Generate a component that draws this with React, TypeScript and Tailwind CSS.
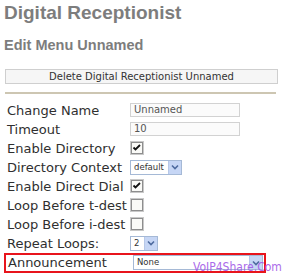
import React from "react";

const labelCls =
  "w-[126px] shrink-0 pl-[3px] text-[13px] leading-none text-[#2f2f2f] [font-family:'DejaVu_Sans',Verdana,sans-serif]";

function Check({ checked }: { checked: boolean }) {
  return (
    <svg width="14" height="14" viewBox="0 0 14 14">
      <rect x="0.5" y="0.5" width="13" height="13" fill="#f0f0ec" stroke="#c9c9c9" />
      <rect x="1.5" y="1.5" width="11" height="11" fill="#fafaf7" stroke="#8e8e8e" />
      {checked && (
        <path d="M3.5 6.5 L5.5 8.5 L10 4" fill="none" stroke="#111" strokeWidth="1.8" />
      )}
    </svg>
  );
}

function Select({ value, w }: { value: string; w: string }) {
  return (
    <div
      className={`${w} h-[15px] flex items-stretch border border-[#a5b9d6] bg-white [font-family:'DejaVu_Sans',Verdana,sans-serif]`}
    >
      <div className="flex-1 pl-[3px] text-[8.5px] leading-[13px] text-[#333]">{value}</div>
      <div className="w-[13px] flex items-center justify-center bg-[#c6d6f5] border-l border-[#b7c8e8]">
        <svg width="8" height="6" viewBox="0 0 8 6">
          <path d="M1 1.5 L4 4.5 L7 1.5" fill="none" stroke="#4d6a9e" strokeWidth="1.6" />
        </svg>
      </div>
    </div>
  );
}

function TextIn({ value }: { value: string }) {
  return (
    <div className="w-[110px] h-[14px] border border-[#d2d2d2] bg-[#fbfbfb] pl-[3px] text-[10px] leading-[12px] text-[#555] [font-family:'DejaVu_Sans',Verdana,sans-serif]">
      {value}
    </div>
  );
}

function Row({ label, children }: { label: string; children: React.ReactNode }) {
  return (
    <div className="flex h-[19px] items-center">
      <div className={labelCls}>{label}</div>
      <div className="flex items-center">{children}</div>
    </div>
  );
}

export default function App() {
  return (
    <div className="relative w-[285px] h-[274px] overflow-hidden bg-white pl-[4px]">
      <div className="h-[23px] pt-[3px] text-[19px] leading-none font-bold text-[#7d7d7d] [font-family:'Liberation_Sans',Arial,sans-serif]">
        Digital Receptionist
      </div>
      <div className="mt-[15px] text-[14.5px] leading-none font-bold text-[#7d7d7d] [font-family:'Liberation_Sans',Arial,sans-serif]">
        Edit Menu Unnamed
      </div>
      <div className="mt-[16px] ml-[1px] w-[273px] h-[15px] border border-[#cfcfcf] bg-[#f6f6f6] text-center text-[10px] leading-[13px] text-[#333] [font-family:'DejaVu_Sans',Verdana,sans-serif]">
        Delete Digital Receptionist Unnamed
      </div>
      <div className="mt-[8px] ml-[1px] w-[271px] h-[2px] bg-[#cdc6b2]" />
      <div className="mt-[7px]">
        <Row label="Change Name">
          <TextIn value="Unnamed" />
        </Row>
        <Row label="Timeout">
          <TextIn value="10" />
        </Row>
        <Row label="Enable Directory">
          <Check checked />
        </Row>
        <Row label="Directory Context">
          <Select value="default" w="w-[52px]" />
        </Row>
        <Row label="Enable Direct Dial">
          <Check checked />
        </Row>
        <Row label="Loop Before t-dest">
          <Check checked={false} />
        </Row>
        <Row label="Loop Before i-dest">
          <Check checked={false} />
        </Row>
        <Row label="Repeat Loops:">
          <Select value="2" w="w-[28px]" />
        </Row>
        <div className="w-[262px] h-[20px] border-2 border-[#e8141c] flex items-center">
          <div className="w-[127px] shrink-0 pl-[2px] text-[13px] leading-none text-[#2f2f2f] [font-family:'DejaVu_Sans',Verdana,sans-serif]">
            Announcement
          </div>
          <Select value="None" w="w-[130px]" />
        </div>
      </div>
      <div className="absolute left-[193px] top-[261px] text-[12px] leading-none text-[#a35ae8] opacity-90 [font-family:'DejaVu_Sans_Condensed','DejaVu_Sans',sans-serif]">
        VoIP4Share.Com
      </div>
    </div>
  );
}
